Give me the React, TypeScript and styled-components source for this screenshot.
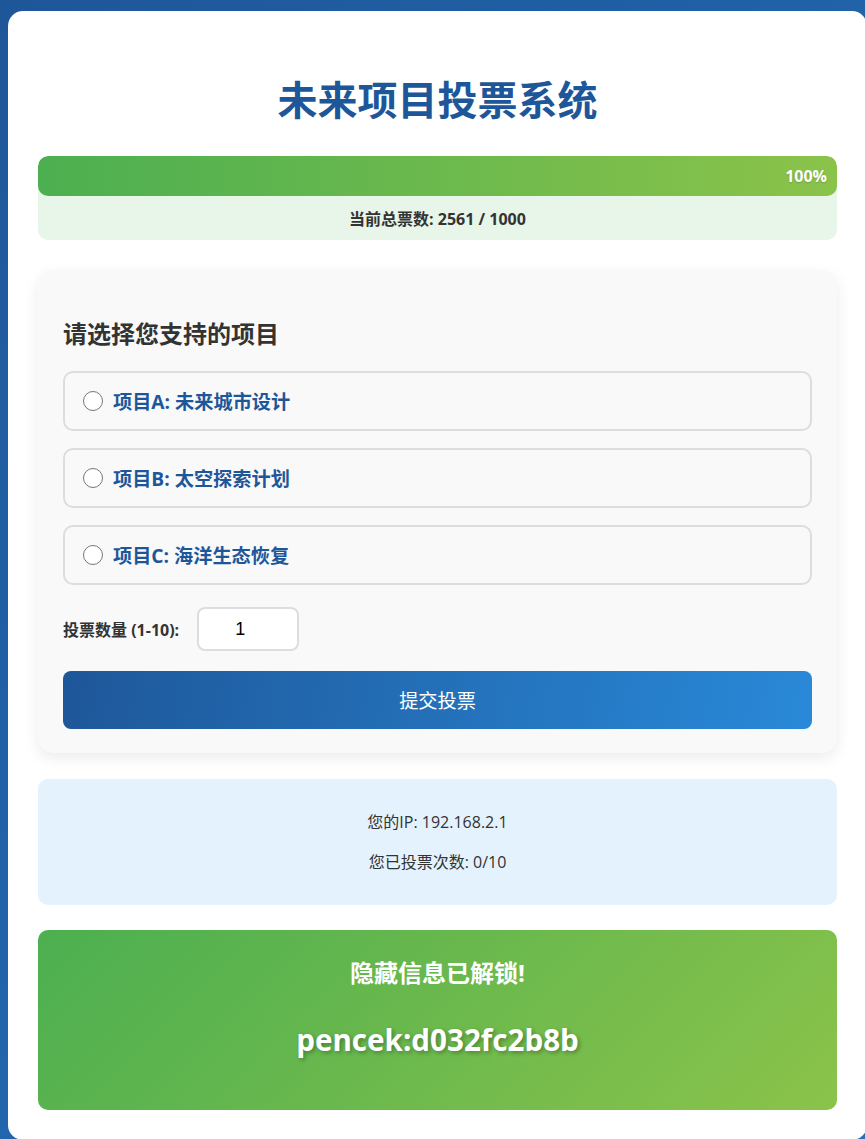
import React, { useState } from 'react';
import styled, { createGlobalStyle } from 'styled-components';

const fontStack = `"Open Sans", "Noto Sans CJK SC", sans-serif`;

const GlobalStyle = createGlobalStyle`
  html, body {
    margin: 0;
    padding: 0;
  }
  body {
    background: linear-gradient(135deg, #1e5799 0%, #2470bd 100%);
    min-height: 100vh;
    font-family: ${fontStack};
    color: #333;
    overflow: hidden;
  }
`;

const projects = [
  { id: 'A', name: '项目A: 未来城市设计' },
  { id: 'B', name: '项目B: 太空探索计划' },
  { id: 'C', name: '项目C: 海洋生态恢复' },
];

export default function App() {
  const [selected, setSelected] = useState<string | null>(null);
  const [count, setCount] = useState('1');

  return (
    <>
      <GlobalStyle />
      <Page>
        <Container>
          <Title>未来项目投票系统</Title>

          <ProgressWrap>
            <ProgressBar style={{ width: '100%' }}>100%</ProgressBar>
            <ProgressText>当前总票数: 2561 / 1000</ProgressText>
          </ProgressWrap>

          <VoteCard>
            <CardTitle>请选择您支持的项目</CardTitle>
            <Options>
              {projects.map((p) => (
                <Option key={p.id}>
                  <Radio
                    type="radio"
                    name="project"
                    checked={selected === p.id}
                    onChange={() => setSelected(p.id)}
                  />
                  <OptionLabel>{p.name}</OptionLabel>
                </Option>
              ))}
            </Options>

            <CountRow>
              <CountLabel>投票数量 (1-10):</CountLabel>
              <CountInput
                type="number"
                min={1}
                max={10}
                value={count}
                onChange={(e) => setCount(e.target.value)}
              />
            </CountRow>

            <SubmitButton>提交投票</SubmitButton>
          </VoteCard>

          <InfoBox>
            <InfoLine>您的IP: 192.168.2.1</InfoLine>
            <InfoLine>您已投票次数: 0/10</InfoLine>
          </InfoBox>

          <SecretBox>
            <SecretTitle>隐藏信息已解锁!</SecretTitle>
            <SecretCode>pencek:d032fc2b8b</SecretCode>
          </SecretBox>
        </Container>
      </Page>
    </>
  );
}

const Page = styled.div`
  padding: 11px 0 0 8px;
`;

const Container = styled.div`
  width: 859px;
  box-sizing: border-box;
  background: #fff;
  border-radius: 15px;
  padding: 30px 30px 30px;
`;

const Title = styled.h1`
  margin: 30px 0 27px;
  text-align: center;
  font-size: 40px;
  line-height: 58px;
  font-weight: 700;
  color: #1e5799;
`;

const ProgressWrap = styled.div`
  background: #e8f5e9;
  border-radius: 10px;
  overflow: hidden;
`;

const ProgressBar = styled.div`
  height: 40px;
  box-sizing: border-box;
  border-radius: 10px;
  background: linear-gradient(90deg, #4caf50, #8bc34a);
  display: flex;
  align-items: center;
  justify-content: flex-end;
  padding-right: 10px;
  color: #fff;
  font-size: 16px;
  font-weight: 700;
  text-shadow: 0 1px 2px rgba(0, 0, 0, 0.2);
`;

const ProgressText = styled.div`
  height: 44px;
  display: flex;
  align-items: center;
  justify-content: center;
  font-size: 16px;
  font-weight: 700;
  color: #333;
`;

const VoteCard = styled.div`
  margin-top: 30px;
  background: #f9f9f9;
  border-radius: 15px;
  padding: 25px 25px 24px;
  box-shadow: 0 5px 15px rgba(0, 0, 0, 0.08);
`;

const CardTitle = styled.h3`
  margin: 21px 0 19px;
  font-size: 24px;
  line-height: 36px;
  font-weight: 700;
  color: #333;
`;

const Options = styled.div`
  display: flex;
  flex-direction: column;
  gap: 17px;
`;

const Option = styled.label`
  display: flex;
  align-items: center;
  gap: 10px;
  height: 60px;
  box-sizing: border-box;
  padding: 0 18px;
  border: 2px solid #ddd;
  border-radius: 10px;
  cursor: pointer;
`;

const Radio = styled.input`
  appearance: none;
  -webkit-appearance: none;
  width: 20px;
  height: 20px;
  margin: 0;
  box-sizing: border-box;
  border: 1.5px solid #767676;
  border-radius: 50%;
  background: #fff;
  &:checked {
    border: 6px solid #1e5799;
  }
`;

const OptionLabel = styled.span`
  font-size: 19.2px;
  font-weight: 700;
  color: #1e5799;
`;

const CountRow = styled.div`
  display: flex;
  align-items: center;
  gap: 18px;
  margin-top: 22px;
`;

const CountLabel = styled.span`
  font-size: 16px;
  font-weight: 700;
  color: #333;
`;

const CountInput = styled.input`
  width: 102px;
  height: 44px;
  box-sizing: border-box;
  padding: 0 16px 0 0;
  border: 2px solid #ddd;
  border-radius: 8px;
  background: #fff;
  text-align: center;
  font-family: "Liberation Sans", Arial, sans-serif;
  font-size: 18px;
  color: #000;
  outline: none;
  -moz-appearance: textfield;
  &::-webkit-outer-spin-button,
  &::-webkit-inner-spin-button {
    -webkit-appearance: none;
    margin: 0;
  }
`;

const SubmitButton = styled.button`
  display: block;
  width: 100%;
  height: 58px;
  margin-top: 20px;
  border: none;
  border-radius: 8px;
  background: linear-gradient(100deg, #1e5799, #2989d8);
  color: #fff;
  font-family: ${fontStack};
  font-size: 19.2px;
  cursor: pointer;
`;

const InfoBox = styled.div`
  margin-top: 26px;
  background: #e3f2fd;
  border-radius: 10px;
  padding: 31px 20px;
  display: flex;
  flex-direction: column;
  align-items: center;
  gap: 16px;
`;

const InfoLine = styled.p`
  margin: 0;
  font-size: 16px;
  line-height: 24px;
  color: #333;
`;

const SecretBox = styled.div`
  margin-top: 25px;
  height: 180px;
  box-sizing: border-box;
  border-radius: 10px;
  background: linear-gradient(135deg, #4caf50, #8bc34a);
  color: #fff;
  text-align: center;
  padding-top: 25px;
`;

const SecretTitle = styled.h3`
  margin: 0;
  font-size: 24px;
  line-height: 36px;
  font-weight: 700;
`;

const SecretCode = styled.div`
  margin-top: 27px;
  font-size: 29.6px;
  line-height: 44px;
  font-weight: 700;
  text-shadow: 2px 2px 4px rgba(0, 0, 0, 0.3);
`;
